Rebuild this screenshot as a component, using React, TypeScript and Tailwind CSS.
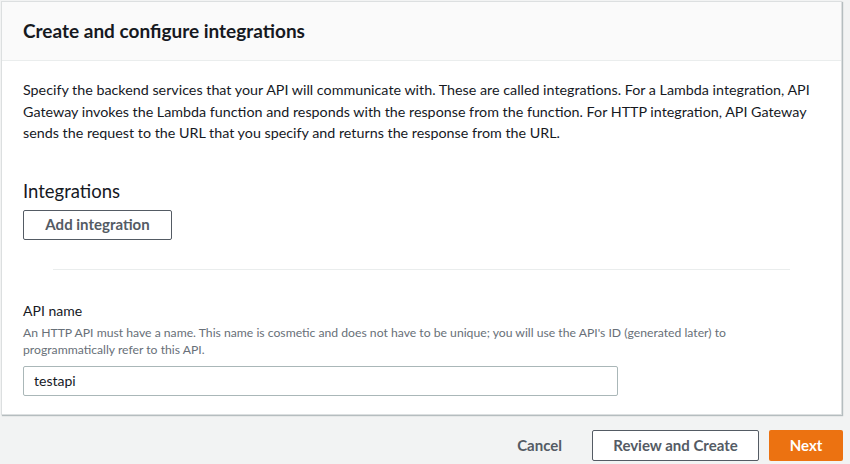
import React from "react";

export default function App() {
  return (
    <div
      className="w-[850px] h-[464px] bg-[#f2f3f3] overflow-hidden pl-px pt-px text-[#16191f]"
      style={{ fontFamily: 'Lato, "Open Sans", sans-serif' }}
    >
      <div className="w-[841px] h-[414px] bg-white border border-[#dcdfe0] shadow-[1px_1px_1px_0_rgba(0,28,36,0.25)] flex flex-col">
        <div className="h-[59px] bg-[#fafafa] border-b border-[#eaeded] flex items-center px-[21px]">
          <h2 className="text-[19px] font-bold leading-[22px]">Create and configure integrations</h2>
        </div>
        <div className="px-[21px] pt-[18px] flex flex-col">
          <p className="text-[14.3px] leading-[21.5px]">
            Specify the backend services that your API will communicate with. These are called integrations. For a Lambda integration, API Gateway invokes the Lambda function and responds with the response from the function. For HTTP integration, API Gateway sends the request to the URL that you specify and returns the response from the URL.
          </p>
          <h3 className="text-[18.5px] leading-[22px] mt-[36px]">Integrations</h3>
          <button className="mt-[8px] w-[149px] h-[30px] border border-[#545b64] rounded-[2px] text-[15px] font-bold text-[#545b64] bg-white">
            Add integration
          </button>
          <div className="mt-[29px] mx-[30px] h-px bg-[#eaeded]" />
          <label className="mt-[31px] text-[14px] leading-[20px]">API name</label>
          <p className="mt-[3px] w-[740px] text-[12.2px] leading-[17px] text-[#687078]">
            An HTTP API must have a name. This name is cosmetic and does not have to be unique; you will use the API's ID (generated later) to programmatically refer to this API.
          </p>
          <div className="mt-[8px] w-[595px] h-[30px] border border-[#aab7b8] rounded-[2px] flex items-center px-[10px] text-[14px]">
            testapi
          </div>
        </div>
      </div>
      <div className="flex justify-end items-center mt-[15px] pr-[7px] gap-[10px]">
        <button className="text-[15px] font-bold text-[#545b64] px-[20px] h-[30px]">Cancel</button>
        <button className="w-[167px] h-[31px] border border-[#545b64] rounded-[2px] bg-white text-[15px] font-bold text-[#545b64]">
          Review and Create
        </button>
        <button className="w-[74px] h-[31px] rounded-[2px] bg-[#ec7211] text-white text-[15px] font-bold">Next</button>
      </div>
    </div>
  );
}
